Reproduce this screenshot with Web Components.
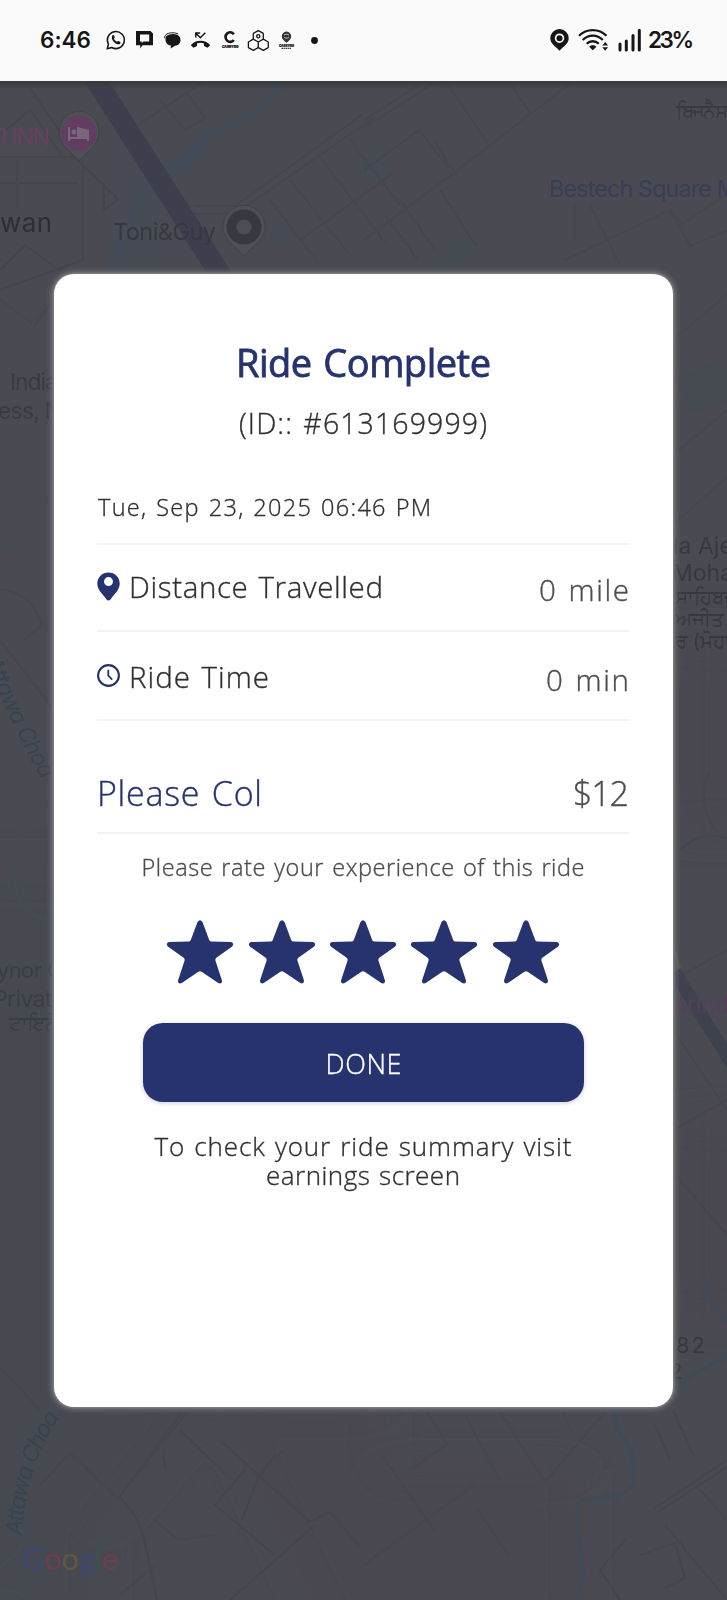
<!DOCTYPE html>
<html lang="en">
<head>
<meta charset="utf-8">
<title>Ride Complete</title>
<style>
html,body{margin:0;padding:0;background:#4a4a52}
body{font-family:"Open Sans","Noto Sans",sans-serif}
</style>
</head>
<body>
<ride-app></ride-app>
<script>
const define=(name,html,ready)=>{
  const t=document.createElement('template');t.innerHTML=html;
  customElements.define(name,class extends HTMLElement{
    constructor(){super();this.attachShadow({mode:'open'}).append(t.content.cloneNode(true));}
    connectedCallback(){if(ready)ready.call(this,this.shadowRoot);}
  });
};

/* One line of text, tracked so that it spans the width given in "w". */
define('fit-text',`<style>:host{display:inline-block;white-space:nowrap;flex:none}span{display:inline-block;word-spacing:.06em}</style><span><slot></slot></span>`,function(r){
  const w=+this.getAttribute('w'),s=r.querySelector('span'),n=this.textContent.trim().length;
  if(!w)return;
  const k=(w-s.getBoundingClientRect().width)/(n-1);
  s.style.letterSpacing=k+'px';s.style.marginRight=-k+'px';
});

const ICONS={
whatsapp:[20,20,`<path d="M1.2 18.8l1.2-4.6A8.5 8.5 0 1 1 5.700 17.500z" fill="none" stroke="#161616" stroke-width="1.5" stroke-linejoin="round"/><path d="M6.300 5.400c.6-.6 1.500-.5 1.800.2l.6 1.500c.2.600-.7 1.200-.7 1.600.4 1.200 1.700 2.500 3 3.100.5.100 1-.9 1.600-.7l1.600.8c.7.400.3 1.700-.5 2.100-3.600 1.600-9.500-4.400-7.400-8.600z" fill="#161616"/>`],
chat:[17,18,`<path d="M0 0h14.500L17 2.500V14.200H6.500L4.200 17.600V14.200H0zM4 3.600v7h1.800v1.500l1.700-1.500h5.700v-7z" fill="#161616" fill-rule="evenodd"/>`],
bubble:[17,17,`<path d="M2 4.500C4 1.500 14 .500 16 5.500c1.700 5-1 7.700-5 8.200L6.700 16.500l.3-3C2 13 .5 8.500 2 4.500z" fill="#161616"/><path d="M.7 6.200C.3 2 4.500.8 9 .8c2 0 4 .4 5.200 1.300" stroke="#161616" fill="none"/>`],
missed:[21,17,`<path d="M.8 13.200C5.500 7.300 15.500 7.300 20.200 13.200l-2.700 2.500-3.500-1.700-.2-2.700c-2.300-.8-4.500-.8-6.700 0L7 14l-3.500 1.700z" fill="#161616"/><path d="M5.800 5.400V1h4.400M6 1.300l4.300 4.500 5-5" fill="none" stroke="#161616" stroke-width="1.500"/>`],
carry:[17,18,`<path d="M11.800 3.200A4.600 4.800 0 1 0 11.800 9" fill="none" stroke="#161616" stroke-width="2.600"/><text x="0" y="17" font-family="Inter,sans-serif" font-weight="900" font-size="4" textLength="16.500" lengthAdjust="spacingAndGlyphs" fill="#161616" stroke="#161616" stroke-width=".2">CARRYme</text>`],
hexes:[21,21,`<g fill="none" stroke="#161616" stroke-width="1.300" stroke-linejoin="round"><path d="M10.300.6l5 2.800v5.700l-5 2.900-5-2.900V3.400zM5.300 9.100l4.900 2.900v5.600l-4.900 2.800-4.900-2.800V12zM15.300 9.100l5 2.900v5.600l-5 2.800-5-2.800V12z"/><circle cx="10.300" cy="6.200" r="1.600"/></g>`],
pinlogo:[15,19,`<path d="M7.500.4a5 5 0 0 0-4.700 5c0 2.700 2.800 4.700 4.700 6.300 1.900-1.600 4.700-3.600 4.700-6.300a5 5 0 0 0-4.700-5z" fill="#333"/><path d="M5 4c1.500-1 3.500-1 5 0M5.200 6.400c1.500 1 3 1 4.600 0" stroke="#ddd" stroke-width=".9" fill="none"/><text x="0" y="15.800" font-family="Inter,sans-serif" font-weight="900" font-size="3.800" textLength="15" lengthAdjust="spacingAndGlyphs" fill="#161616" stroke="#161616" stroke-width=".2">CARRYme</text><path d="M2.500 17.300h10" stroke="#444" stroke-width="1.200" stroke-dasharray="1.500 .5"/>`],
dot:[7,7,`<circle cx="3.500" cy="3.500" r="3.400" fill="#161616"/>`],
location:[19,22,`<path d="M9.500 0a9.200 9.200 0 0 0-9.200 9.200c0 5.300 5.500 8.500 9.200 12.500 3.700-4 9.200-7.200 9.200-12.500A9.200 9.200 0 0 0 9.500 0z" fill="#161616"/><circle cx="9.500" cy="9.200" r="3.900" fill="none" stroke="#fafafa" stroke-width="1.700"/>`],
wifi:[31,22,`<g fill="none" stroke="#161616" stroke-width="2.300"><path d="M1 6.800C8.500-.8 21-.8 28.500 6.800"/><path d="M4.700 11C10.500 5.200 19 5.200 24.800 11"/><path d="M8.700 14.800c3.500-3.400 8.600-3.400 12.100 0"/></g><path d="M11.200 17.700c2-1.800 5.200-1.800 7.200 0l-3.600 3.600z" fill="#161616"/><path d="M24.300 16.400l2.900-3.500 2.900 3.500zM24.300 18.300l2.900 3.400 2.900-3.400z" fill="#161616"/>`],
signal:[23,22,`<path d="M2 15v6M8.300 12v9M15 6.500v14.500M21.300 1.300v19.700" stroke="#161616" stroke-width="3" stroke-linecap="round"/>`],
pin:[23,29,`<path d="M11.500.5C5.200.5.300 5.300.300 11.500c0 7 6 11 9 15.700q2.200 2.600 4.400 0c3-4.700 9-8.700 9-15.700C22.700 5.300 17.800.5 11.500.5z" fill="#26336e"/><circle cx="11.500" cy="9.600" r="4.500" fill="#fff"/>`],
clock:[23,23,`<circle cx="11.500" cy="11.500" r="10.400" fill="none" stroke="#26336e" stroke-width="2.100"/><path d="M11.300 5.800V11.700l3.900 4" fill="none" stroke="#26336e" stroke-width="1.800"/>`],
star:[66,64,`<path d="M30.500 1.900Q33 -1.400 35.500 1.900L42.300 20.300Q43 21.600 44.500 21.600L64 22Q67.600 23.400 65.200 26.400L49.300 37.700Q48 39 48.400 40.500L55 60.400Q55.200 64.300 51.300 63.100L34.600 51.700Q33 50.800 31.400 51.700L14.700 63.100Q10.800 64.300 11 60.400L17.600 40.500Q18 39 16.700 37.700L.8 26.400Q-1.600 23.400 2 22L21.500 21.600Q23 21.600 23.700 20.300Z" fill="#26336e"/>`]
};
define('ui-icon',`<style>:host{display:block;flex:none}svg{display:block;overflow:visible}</style><div></div>`,function(r){
  const [w,h,p]=ICONS[this.getAttribute('name')];
  r.querySelector('div').innerHTML=`<svg width="${w}" height="${h}" viewBox="0 0 ${w} ${h}">${p}</svg>`;
});

define('status-bar',`<style>
:host{display:flex;height:81px;box-sizing:border-box;padding:0 33px 1px 40px;background:#fafafa;align-items:center;justify-content:space-between;color:#161616;font:600 22.500px/30px Inter,sans-serif}
div{display:flex;align-items:center}
</style>
<div><fit-text w="51">6:46</fit-text>
<ui-icon name="whatsapp" style="margin-left:15px"></ui-icon><ui-icon name="chat" style="margin-left:10px"></ui-icon><ui-icon name="bubble" style="margin-left:11px"></ui-icon><ui-icon name="missed" style="margin-left:9px"></ui-icon><ui-icon name="carry" style="margin-left:11px"></ui-icon><ui-icon name="hexes" style="margin-left:9px"></ui-icon><ui-icon name="pinlogo" style="margin-left:10px"></ui-icon><ui-icon name="dot" style="margin-left:17px"></ui-icon></div>
<div><ui-icon name="location"></ui-icon><ui-icon name="wifi" style="margin:-1px 0 0 9px"></ui-icon><ui-icon name="signal" style="margin:-1px 0 0 9px"></ui-icon><fit-text w="46" style="margin-left:7px">23%</fit-text></div>`);

define('city-map',`<style>:host{display:block;background:#4a4a52;overflow:hidden}svg{display:block}
text{font-family:Inter,"Noto Sans",sans-serif}</style>
<svg width="727" height="1519" viewBox="0 81 727 1519">
<defs><linearGradient id="top" x2="0" y2="1"><stop stop-color="#37393b"/><stop offset="1" stop-color="#37393b" stop-opacity="0"/></linearGradient>
<filter id="soft" filterUnits="userSpaceOnUse" x="-60" y="0" width="900" height="1700"><feGaussianBlur stdDeviation="18"/></filter></defs>
<g filter="url(#soft)"><path d="M-40 870H100V1640H-40zM54 1380H230L95 1540H0z" fill="#464a51"/><path d="M220 1405H380V1640H330z" fill="#4a4750"/><path d="M673 640h90v190h-90zM673 1120h90v200h-90zM380 1470h200v170H380z" fill="#494750"/></g>
<path d="M98 120l55 52 12 110-60-10z" fill="#474c54" opacity=".55"/>
<path d="M155 172l65 100H110l28-60z" fill="#464c53" opacity=".5"/>
<g fill="#454c54"><path d="M363 160l16-12 13 24-22 12-10-8zM425 265l45-35 8 12-12 23zM270 230l16-12 5 18-16 12z"/><path d="M673 380l40-20 14 8v35l-35 10z" opacity=".6"/></g>
<g fill="none" stroke="#42444c" stroke-width="2" opacity=".62">
<path d="M0 157H84M0 183H78M17 160v48M83 160v100L0 290M30 88l45 66M0 135l30-25 35 50M104 182v28l14-11-48-46M0 270l25-25 35 26"/>
<path d="M130 130l130-85M160 100l25 30 20-12-20-28M195 206h40l128-92M190 214h45l140-97M300 240l92-66M270 200l50 65M290 180l60 75M320 157l65 85M350 140l50 65" opacity=".75"/>
<path d="M364 120l55-35M364 128l70-45M448 85l40 58M512 85l18 28M364 170l55-40 30 38M438 185l133-102M435 142l22 34M440 190l36 56M385 215l33 45M400 200l35 50M364 240l80-60M575 240v-38M565 260l105-50 20 36 37-15M590 205l30 60M670 210l12 14 45-30" opacity=".75"/>
<path d="M673 340l54-45M673 455l54-45M673 525l54-48M0 300l35 25 18-24" opacity=".6"/>
<path d="M0 590q30 0 42 35l-18 15M0 640l54 70M0 1367l40 43M40 1485l30-32 48 46M120 1595l35-30M154 1520l25 20 35-5" opacity=".75"/>
<path d="M187 1412l-68 85q18 15 26 45l12 58M182 1412l-65 88M163 1455l3 15M180 1430l52 50M220 1440l90 82 20-10 30 35M245 1470l-30 35 60 50M275 1455l-18 25-15 40M230 1600l85-75M275 1460l8-10"/>
<path d="M364 1565l110-80M382 1455l52 75M427 1412l20 32-35 25M465 1415l35 65M500 1412l45 70 60-70M478 1510l30 45M562 1412l10 20" opacity=".6"/>
<path d="M655 1508l72-48M658 1512l69-45M673 1410l20 45M655 1425l15 35M625 1540l-25 30 20 30M665 1525l62 75M640 1555l35-12 10 35-20 10M700 1490l27 30" />
<path d="M673 980l54-30M673 1030l54 80M673 1130l54-30M675 1175l52 60M710 770q-15 30 5 60M680 850q20-20 47-12" opacity=".7"/></g>
<path d="M287 81q-15 8-28 28-22 18-50 25-15 28-44 35-30 25-33 55L108 273" fill="none" stroke="#434c58" stroke-width="6"/>
<path d="M164 164q30-17 44-31l-1 17q-16 20-40 30z" fill="#434c58"/>
<path d="M88 68l139 217" stroke="#3d3f4f" stroke-width="21"/><path d="M667 960l70 112" stroke="#3e424e" stroke-width="13"/><path d="M673 942l8 26-8 5z" fill="#56584d"/>
<g fill="none" stroke="#434c57" stroke-width="2.500"><path d="M0 362l25-25 20-32 9-8M0 467q35 18 50 45M0 546q25 10 54 8M54 793Q5 840 12 870q6 50 42 50M0 1568l22-20 0-45M0 1590q20 0 30 12"/>
<path d="M615 1411q-2 12 8 27 14 18 11 45-4 10-25 14l-26 3q-8 4-6 30 7 35 5 50l-7 20M707 1280v15l20 27M727 1357q-25 10-54 32" stroke="#414b57" stroke-width="4"/></g>
<g fill="#4f4f57"><path d="M79 111a21 21 0 0 0-20 21c0 14 13 20 20 29 7-9 20-15 20-29a21 21 0 0 0-20-21zM244 205a22 22 0 0 0-21 22c0 14 14 20 21 29 7-9 21-15 21-29a22 22 0 0 0-21-22z" stroke="#414249"/></g>
<circle cx="79" cy="133" r="17.500" fill="#633d61"/><path d="M69 127v14M69 138h19v3M88 138v-7l-10-3v9" fill="none" stroke="#79667c" stroke-width="2"/><path d="M78 129h7q3 0 3 4v5H78z" fill="#79667c"/><circle cx="74" cy="132" r="2.500" fill="#79667c"/>
<circle cx="244" cy="227" r="17.500" fill="#373941"/><circle cx="244" cy="227" r="7.500" fill="#4d4d55"/>
<text x="-12" y="145" font-size="23" textLength="62" fill="#6a405f">TI INN</text>
<text x="0" y="232" font-size="26" textLength="52" fill="#2c2e34">wan</text>
<text x="113" y="240" font-size="23.500" textLength="103" fill="#363840">Toni&amp;Guy</text>
<text x="549" y="197" font-size="23.500" textLength="189" fill="#383e56">Bestech Square M</text>
<text x="674" y="118" font-size="20" textLength="52" fill="#393a41">ਬਿਜਨੈਸ</text>
<text x="10" y="390" font-size="23" textLength="48" fill="#3a3b42">India</text><text x="-2" y="419" font-size="23" textLength="64" fill="#3a3b42">ess, N</text>
<g fill="#373840"><text x="673" y="554" font-size="23">la Ajeet</text><text x="672" y="581" font-size="23">Mohali</text><text x="675" y="604" font-size="20">ਸਾਹਿਬਜ਼</text><text x="675" y="626" font-size="20">ਅਜੀਤ ਸਿੰ</text><text x="675" y="648" font-size="20">ਰ (ਮੋਹਾਲੀ</text></g>
<text x="-3" y="978" font-size="22" fill="#393d44" textLength="66">ynor C</text><text x="-7" y="1007" font-size="23" fill="#393d44" textLength="72">Private</text><text x="9" y="1030" font-size="20" fill="#393d44">ਟਾਇਨੋ</text>
<text x="674" y="1013" font-size="23" fill="#573f59">arinda</text>
<g fill="#36373f" font-size="22"><text x="676" y="1353" textLength="29">82</text><text x="669" y="1379">2</text></g>
<path id="r1" d="M-15 660Q18 742 47 787" fill="none"/><path id="r2" d="M22 1536Q25 1465 62 1414" fill="none"/>
<g fill="#344551" font-style="italic"><text font-size="23"><textPath href="#r1" textLength="133">Attawa Choa</textPath></text><text font-size="23"><textPath href="#r2" textLength="127">Attawa Choa</textPath></text></g>
<text x="22" y="1570" font-size="31" textLength="96" style="font-family:Lato,sans-serif"><tspan fill="#3e4873">G</tspan><tspan fill="#6e3f4b">o</tspan><tspan fill="#655640">o</tspan><tspan fill="#3e4873">g</tspan><tspan fill="#35564a">l</tspan><tspan fill="#6e3f4b">e</tspan></text>
<rect y="81" width="727" height="8" fill="url(#top)"/>
</svg>`);

define('detail-row',`<style>
:host{display:flex;box-sizing:border-box;justify-content:space-between;align-items:flex-start;border-bottom:2px solid #f3f3f5}
div{display:flex;align-items:flex-start}
.v{padding-top:var(--drop,3px);color:#4d4d4f}
</style><div><slot name="icon"></slot><slot></slot></div><div class="v"><slot name="value"></slot></div>`);

define('star-rating',`<style>:host{display:flex;justify-content:center;gap:15.400px}</style>
<ui-icon name="star"></ui-icon><ui-icon name="star"></ui-icon><ui-icon name="star"></ui-icon><ui-icon name="star"></ui-icon><ui-icon name="star"></ui-icon>`);

define('primary-button',`<style>:host{display:block}
button{display:flex;width:100%;height:79px;border:0;border-radius:20px;padding:2px 0 0;align-items:center;justify-content:center;background:#26336e;color:#fff;font:inherit;box-shadow:0 1px 4px #26336e40}</style><button><slot></slot></button>`);

define('ride-card',`<style>
:host{display:flex;flex-direction:column;box-sizing:border-box;width:619px;height:1133px;padding:63px 44px 0 43px;border-radius:20px;background:#fff;color:#303032;box-shadow:0 0 0 1.500px #77777c,0 0 5px 3px #707076;font-weight:300}
fit-text{-webkit-text-stroke:.35px currentColor}
.c{align-self:center}
.title{font-size:38px;line-height:50px;font-weight:400;color:#26336e;-webkit-text-stroke:.8px #26336e;margin-left:1px}
.id{font-size:28.500px;line-height:40px;margin-top:16px}
.date{font-size:23.500px;line-height:34px;margin-top:47px;padding:0 0 19px 1px;border-bottom:2px solid #f3f3f5}
.row{font-size:29.500px;line-height:40px}
.fare{--drop:0px;height:113px;padding-top:50px;font-size:34px;line-height:44px;color:#26336e}
.rate{font-size:23.500px;line-height:32px;margin-top:17px;color:#4d4d4f}
star-rating{margin-top:37px}
primary-button{margin:39px 45px 0 46px;font-size:27px;line-height:30px}
.note{display:flex;flex-direction:column;align-items:center;font-size:26px;line-height:28.500px;margin-top:30px}
</style>
<fit-text class="c title" w="255">Ride Complete</fit-text>
<fit-text class="c id" w="248">(ID:: #613169999)</fit-text>
<div class="date"><fit-text w="333">Tue, Sep 23, 2025 06:46 PM</fit-text></div>
<detail-row class="row" style="height:87px;padding-top:22px"><ui-icon slot="icon" name="pin" style="margin:5px 9px 0 0"></ui-icon><fit-text w="254">Distance Travelled</fit-text><fit-text slot="value" w="90">0 mile</fit-text></detail-row>
<detail-row class="row" style="height:89px;padding-top:25px"><ui-icon slot="icon" name="clock" style="margin:7px 9px 0 0"></ui-icon><fit-text w="140">Ride Time</fit-text><fit-text slot="value" w="83">0 min</fit-text></detail-row>
<detail-row class="fare"><fit-text w="165">Please Col</fit-text><fit-text slot="value" w="56">$12</fit-text></detail-row>
<fit-text class="c rate" w="443">Please rate your experience of this ride</fit-text>
<star-rating></star-rating>
<primary-button><fit-text w="76">DONE</fit-text></primary-button>
<div class="note"><fit-text w="417">To check your ride summary visit</fit-text><fit-text w="194">earnings screen</fit-text></div>`);

define('ride-app',`<style>
:host{display:grid;grid-template:81px 1519px / 727px;width:727px;height:1600px;overflow:hidden}
city-map,ride-card{grid-area:2/1}
ride-card{margin:193px 0 0 54px;z-index:1}
</style><status-bar></status-bar><city-map></city-map><ride-card></ride-card>`);
</script>
</body>
</html>
